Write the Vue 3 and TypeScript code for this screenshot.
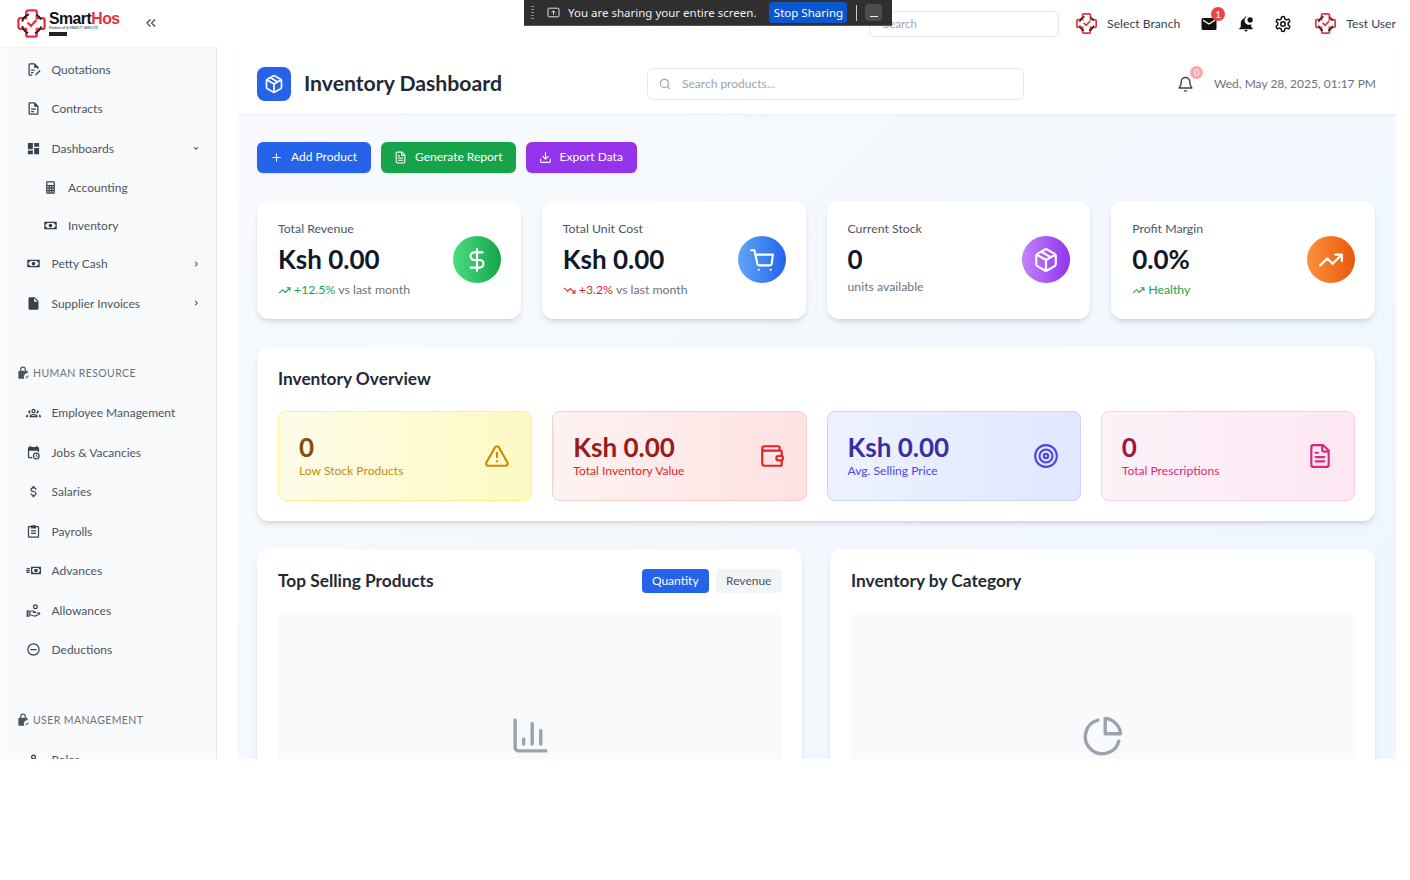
<template>
  <div class="page">
    <svg class="defs" width="0" height="0">
      <symbol id="logo" viewBox="0 0 32 32">
        <path d="M12.500 2.500h7a2 2 0 0 1 2 2v6h6a2 2 0 0 1 2 2v7a2 2 0 0 1-2 2h-6v6a2 2 0 0 1-2 2h-7a2 2 0 0 1-2-2v-6h-6a2 2 0 0 1-2-2v-7a2 2 0 0 1 2-2h6v-6a2 2 0 0 1 2-2z" fill="none" stroke="#e2333d" stroke-width="2.400" />
        <path d="M6.500 14a10 10 0 0 1 7-7.500M26 12a10 10 0 0 0-5-5M6.500 18.500a10 10 0 0 0 6 7.500M19.500 26a10 10 0 0 0 6.500-7" fill="none" stroke="#1f1f1f" stroke-width="1.800" />
        <path d="M12 15l3.500 3.500 5.500-6" fill="none" stroke="#e2333d" stroke-width="2.400" />
      </symbol>
    </svg>

    <header class="topbar">
      <div class="brand">
        <svg class="brand-logo"><use href="#logo" /></svg>
        <div class="brand-text">
          <div class="brand-name">Smart<span>Hos</span></div>
          <div class="brand-tag">Product of G-MAXI IT GEN LTD</div>
          <div class="brand-box"></div>
        </div>
      </div>
      <svg class="collapse" viewBox="0 0 24 24"><path d="M11 6l-6 6 6 6M19 6l-6 6 6 6" /></svg>

      <div class="top-right">
        <div class="top-search">Search</div>
        <div class="top-branch">
          <svg class="small-logo"><use href="#logo" /></svg>
          <span>Select Branch</span>
        </div>
        <div class="top-icon mail">
          <svg viewBox="0 0 24 24" fill="#111"><path d="M20 4H4a2 2 0 0 0-2 2v12a2 2 0 0 0 2 2h16a2 2 0 0 0 2-2V6a2 2 0 0 0-2-2zm0 4l-8 5-8-5V6l8 5 8-5z" /></svg>
          <span class="mail-count">1</span>
        </div>
        <div class="top-icon">
          <svg viewBox="0 0 24 24" fill="#111"><path d="M21 6.500a3.500 3.500 0 1 1-7 0 3.500 3.500 0 0 1 7 0zM19 12.300V16l2 2v1H3v-1l2-2v-5c0-3.100 2-5.700 5-6.600V4a2 2 0 0 1 2.900-1.800A5.500 5.500 0 0 0 19 12.300zM14 20a2 2 0 0 1-4 0z" /></svg>
        </div>
        <div class="top-icon">
          <svg viewBox="0 0 24 24" fill="none" stroke="#111" stroke-width="2"><circle cx="12" cy="12" r="3" /><path d="M12.200 2h-.4a2 2 0 0 0-2 2v.2a2 2 0 0 1-1 1.700l-.4.300a2 2 0 0 1-2 0l-.2-.1a2 2 0 0 0-2.700.7l-.2.400a2 2 0 0 0 .7 2.700l.2.100a2 2 0 0 1 1 1.700v.5a2 2 0 0 1-1 1.700l-.2.100a2 2 0 0 0-.7 2.700l.2.400a2 2 0 0 0 2.700.7l.2-.1a2 2 0 0 1 2 0l.4.300a2 2 0 0 1 1 1.700v.2a2 2 0 0 0 2 2h.4a2 2 0 0 0 2-2v-.2a2 2 0 0 1 1-1.700l.4-.3a2 2 0 0 1 2 0l.2.100a2 2 0 0 0 2.700-.7l.2-.4a2 2 0 0 0-.7-2.700l-.2-.1a2 2 0 0 1-1-1.700v-.5a2 2 0 0 1 1-1.700l.2-.1a2 2 0 0 0 .7-2.700l-.2-.4a2 2 0 0 0-2.700-.7l-.2.100a2 2 0 0 1-2 0l-.4-.3a2 2 0 0 1-1-1.700V4a2 2 0 0 0-2-2z" /></svg>
        </div>
        <div class="top-user">
          <svg class="small-logo"><use href="#logo" /></svg>
          <span>Test User</span>
        </div>
      </div>
    </header>

    <div class="share-bar">
      <span class="grip"></span>
      <svg class="share-icon" viewBox="0 0 16 14" fill="none" stroke="#eee" stroke-width="1.200"><rect x="1" y="1.500" width="14" height="11" rx="1.500" /><path d="M8 10V5M5.800 7L8 4.800 10.200 7" /></svg>
      <span class="share-text">You are sharing your entire screen.</span>
      <button class="share-stop">Stop Sharing</button>
      <span class="share-divider"></span>
      <button class="share-min"><i></i></button>
    </div>

    <div class="layout">
      <aside class="sidebar">
        <template v-for="group in menu" :key="group.title">
          <div v-if="group.title" class="side-label">
            <svg viewBox="0 0 24 24" fill="#4b5563"><path d="M12 1a5 5 0 0 0-5 5v2H6a2 2 0 0 0-2 2v10a2 2 0 0 0 2 2h8.500l-.5-1a6 6 0 0 1 6-8.500V10a2 2 0 0 0-2-2h-1V6a5 5 0 0 0-5-5zm0 2a3 3 0 0 1 3 3v2H9V6a3 3 0 0 1 3-3zM16 19l2 2 4-4-1-1-3 3-1-1z" /></svg>
            {{ group.title }}
          </div>
          <div class="side-items">
            <div v-for="item in group.items" :key="item.name" class="side-item" :class="{ 'side-sub': item.sub }">
              <svg class="side-icon" viewBox="0 0 24 24"><path :d="sideIcons[item.icon]" /></svg>
              <span class="side-name">{{ item.name }}</span>
              <svg v-if="item.arrow" class="side-arrow" viewBox="0 0 24 24">
                <path :d="item.arrow === 'down' ? 'M7 10l5 5 5-5' : 'M10 7l5 5-5 5'" />
              </svg>
            </div>
          </div>
        </template>
      </aside>

      <main class="main">
        <div class="main-head">
          <div class="head-title">
            <span class="head-badge">
              <svg viewBox="0 0 24 24" fill="none" stroke="#fff" stroke-width="2" stroke-linejoin="round"><path :d="boxIcon" /></svg>
            </span>
            <h1>Inventory Dashboard</h1>
          </div>
          <div class="head-search">
            <svg viewBox="0 0 24 24" fill="none" stroke="#9ca3af" stroke-width="2" stroke-linecap="round"><circle cx="11" cy="11" r="7" /><path d="M20 20l-4-4" /></svg>
            <span>Search products...</span>
          </div>
          <div class="head-right">
            <div class="head-bell">
              <svg viewBox="0 0 24 24" fill="none" stroke="#374151" stroke-width="2" stroke-linecap="round" stroke-linejoin="round"><path d="M6 8a6 6 0 0 1 12 0c0 7 3 8 3 9H3c0-1 3-2 3-9M10.500 21h3" /></svg>
              <span class="bell-count">0</span>
            </div>
            <span class="head-date">Wed, May 28, 2025, 01:17 PM</span>
          </div>
        </div>

        <div class="content">
          <div class="actions">
            <button v-for="a in actions" :key="a.label" class="action" :class="a.cls">
              <svg viewBox="0 0 24 24" fill="none" stroke="#fff" stroke-width="2" stroke-linecap="round" stroke-linejoin="round"><path :d="a.icon" /></svg>
              <span>{{ a.label }}</span>
            </button>
          </div>

          <div class="stats">
            <div v-for="s in stats" :key="s.label" class="stat">
              <div>
                <div class="stat-label">{{ s.label }}</div>
                <div class="stat-value">{{ s.value }}</div>
                <div class="stat-note" :class="{ plain: !s.trend }">
                  <svg v-if="s.trend" viewBox="0 0 24 24" fill="none" stroke-width="2" :class="s.trend"><path :d="s.trend === 'up' ? trendUp : trendDown" /></svg>
                  <span v-if="s.delta" :class="s.trend">{{ s.delta }}</span>
                  {{ s.note }}
                </div>
              </div>
              <span class="stat-icon" :class="s.cls">
                <svg viewBox="0 0 24 24" fill="none" stroke="#fff" stroke-width="2" stroke-linecap="round" stroke-linejoin="round"><path :d="s.icon" /></svg>
              </span>
            </div>
          </div>

          <section class="panel overview">
            <h2>Inventory Overview</h2>
            <div class="tiles">
              <div v-for="t in tiles" :key="t.label" class="tile" :class="t.cls">
                <div>
                  <div class="tile-value">{{ t.value }}</div>
                  <div class="tile-label">{{ t.label }}</div>
                </div>
                <svg viewBox="0 0 24 24" fill="none" stroke="currentColor" stroke-width="2" stroke-linecap="round" stroke-linejoin="round"><path :d="t.icon" /></svg>
              </div>
            </div>
          </section>

          <div class="charts">
            <section class="panel chart">
              <div class="chart-head">
                <h2>Top Selling Products</h2>
                <div class="toggle">
                  <button class="on">Quantity</button>
                  <button>Revenue</button>
                </div>
              </div>
              <div class="chart-empty">
                <svg viewBox="0 0 24 24" fill="none" stroke="#9ca3af" stroke-width="2" stroke-linecap="round" stroke-linejoin="round"><path d="M3 3v16a2 2 0 0 0 2 2h16M8 17v-3M13 17V5M18 17V9" /></svg>
              </div>
            </section>
            <section class="panel chart">
              <div class="chart-head">
                <h2>Inventory by Category</h2>
              </div>
              <div class="chart-empty">
                <svg viewBox="0 0 24 24" fill="none" stroke="#9ca3af" stroke-width="2" stroke-linecap="round" stroke-linejoin="round"><path d="M21 15.300A10 10 0 1 1 8.700 3M22 11A10 10 0 0 0 13 2v9z" /></svg>
              </div>
            </section>
          </div>
        </div>
      </main>
    </div>
  </div>
</template>

<script setup lang="ts">
interface MenuItem {
  name: string
  icon: string
  sub?: boolean
  arrow?: 'down' | 'right'
}

const sideIcons: Record<string, string> = {
  quote: 'M6 2h8l6 6v3h-2V9h-5V4H6v16h4v2H6a2 2 0 0 1-2-2V4a2 2 0 0 1 2-2zm2 10h6v2H8zm0 4h4v2H8zm13.700-3.300l1.600 1.600-6.300 6.300-2.500.9.900-2.500z',
  doc: 'M6 2h8l6 6v12a2 2 0 0 1-2 2H6a2 2 0 0 1-2-2V4a2 2 0 0 1 2-2zm0 2v16h12V9h-5V4zm2 8h8v2H8zm0 4h5v2H8z',
  dash: 'M13 3v6h8V3m-8 18h8V11h-8M3 21h8v-6H3m0-2h8V3H3v10z',
  calc: 'M7 2h10a2 2 0 0 1 2 2v16a2 2 0 0 1-2 2H7a2 2 0 0 1-2-2V4a2 2 0 0 1 2-2m0 2v4h10V4H7m0 6v2h2v-2H7m4 0v2h2v-2h-2m4 0v2h2v-2h-2m-8 4v2h2v-2H7m4 0v2h2v-2h-2m4 0v2h2v-2h-2m-8 4v2h2v-2H7m4 0v2h2v-2h-2m4 0v2h2v-2h-2z',
  cash: 'M2 6h20v12H2V6zm10 3a3 3 0 1 0 0 6 3 3 0 0 0 0-6zM6.500 8A2.500 2.500 0 0 1 4 10.500v3A2.500 2.500 0 0 1 6.500 16h11a2.500 2.500 0 0 1 2.500-2.500v-3A2.500 2.500 0 0 1 17.500 8h-11z',
  file: 'M13 9V3.500L18.500 9M6 2c-1.110 0-2 .89-2 2v16a2 2 0 0 0 2 2h12a2 2 0 0 0 2-2V8l-6-6H6z',
  people: 'M12 6a3.500 3.500 0 1 1 0 7 3.500 3.500 0 0 1 0-7zm0 2a1.500 1.500 0 1 0 0 3 1.500 1.500 0 0 0 0-3zM5 8.500a2.500 2.500 0 0 1 1.800.7A5 5 0 0 0 7.500 13 2.500 2.500 0 1 1 5 8.500zm14 0a2.500 2.500 0 1 1-2.500 4.500 5 5 0 0 0 .7-3.800 2.500 2.500 0 0 1 1.800-.7zM12 14.500c3.600 0 6.500 1.400 6.500 3.500v1.500h-13V18c0-2.100 2.900-3.500 6.500-3.500zm0 2c-2.200 0-3.900.7-4.300 1h8.600c-.4-.3-2.100-1-4.300-1zM0 19.500V18c0-1.300 1.600-2.300 3.800-2.700-.5.700-.8 1.600-.8 2.700v1.500H0zm24 0h-3V18c0-1.100-.3-2-.8-2.700 2.200.4 3.800 1.400 3.800 2.700v1.500z',
  jobs: 'M6 1h2v2h8V1h2v2h1a2 2 0 0 1 2 2v6h-2V9H5v10h5v2H5a2 2 0 0 1-2-2V5a2 2 0 0 1 2-2h1V1zm10.500 11a5.500 5.500 0 1 1 0 11 5.500 5.500 0 0 1 0-11zm0 2a3.500 3.500 0 1 0 0 7 3.500 3.500 0 0 0 0-7zM16 15h1.200v2.300l1.800 1-.6 1-2.400-1.400z',
  usd: 'M7 15h2c0 1.080 1.370 2 3 2s3-.92 3-2c0-1.100-1.040-1.500-3.240-2.030C9.640 12.440 7 11.780 7 9c0-1.790 1.470-3.310 3.500-3.820V3h3v2.180C15.530 5.690 17 7.210 17 9h-2c0-1.080-1.370-2-3-2s-3 .92-3 2c0 1.100 1.040 1.500 3.240 2.030C14.360 11.560 17 12.220 17 15c0 1.790-1.470 3.310-3.500 3.820V21h-3v-2.180C8.470 18.310 7 16.790 7 15z',
  clip: 'M9 2h6a1 1 0 0 1 1 1v0h3a2 2 0 0 1 2 2v15a2 2 0 0 1-2 2H5a2 2 0 0 1-2-2V5a2 2 0 0 1 2-2h3v0a1 1 0 0 1 1-1zM5 5v15h14V5h-3v2H8V5zm3 5h8v2H8zm0 4h8v2H8z',
  advance: 'M8 6h16v12H8V6zm8 3a3 3 0 1 0 0 6 3 3 0 0 0 0-6zm-5.500-1A2 2 0 0 1 10 10v4a2 2 0 0 1 2 2h8a2 2 0 0 1 2-2v-4a2 2 0 0 1-2-2h-8zM1 8h5v2H1zm-1 3h6v2H0zm1 3h5v2H1z',
  allow: 'M15 2a4 4 0 1 1 0 8 4 4 0 0 1 0-8zm0 2a2 2 0 1 0 0 4 2 2 0 0 0 0-4zM1 12h5v10H1V12zm2 2v6h1v-6zm4-2h3c3 0 5 1 6 2.500V16h-5v-1.500h3.200c-.8-.6-2.200-.9-4.200-.9H8v5l6 1.300 7-2.300c.3-.6-.3-1.100-1-1l-3 1v-2l3.500-.8c2-.3 3.200 1.800 2 3.600L14.500 22 7 20z',
  minus: 'M12 2a10 10 0 1 1 0 20 10 10 0 0 1 0-20zm0 2a8 8 0 1 0 0 16 8 8 0 0 0 0-16zM7 11h10v2H7z',
  person: 'M12 4a4 4 0 1 1 0 8 4 4 0 0 1 0-8zm0 2a2 2 0 1 0 0 4 2 2 0 0 0 0-4zm0 7c2.700 0 8 1.300 8 4v3H4v-3c0-2.700 5.300-4 8-4z',
}

const menu: { title: string; items: MenuItem[] }[] = [
  {
    title: '',
    items: [
      { name: 'Quotations', icon: 'quote' },
      { name: 'Contracts', icon: 'doc' },
      { name: 'Dashboards', icon: 'dash', arrow: 'down' },
      { name: 'Accounting', icon: 'calc', sub: true },
      { name: 'Inventory', icon: 'cash', sub: true },
      { name: 'Petty Cash', icon: 'cash', arrow: 'right' },
      { name: 'Supplier Invoices', icon: 'file', arrow: 'right' },
    ],
  },
  {
    title: 'HUMAN RESOURCE',
    items: [
      { name: 'Employee Management', icon: 'people' },
      { name: 'Jobs & Vacancies', icon: 'jobs' },
      { name: 'Salaries', icon: 'usd' },
      { name: 'Payrolls', icon: 'clip' },
      { name: 'Advances', icon: 'advance' },
      { name: 'Allowances', icon: 'allow' },
      { name: 'Deductions', icon: 'minus' },
    ],
  },
  {
    title: 'USER MANAGEMENT',
    items: [{ name: 'Roles', icon: 'person' }],
  },
]

const boxIcon = 'M21 8a2 2 0 0 0-1-1.700l-7-4a2 2 0 0 0-2 0l-7 4A2 2 0 0 0 3 8v8a2 2 0 0 0 1 1.700l7 4a2 2 0 0 0 2 0l7-4a2 2 0 0 0 1-1.700zM3.300 7L12 12l8.700-5M12 22V12M7.500 4.300l9 5.200'
const trendUp = 'M22 7l-8.500 8.500-5-5L2 17M16 7h6v6'
const trendDown = 'M22 17l-8.500-8.500-5 5L2 7M16 17h6v-6'

const actions = [
  { label: 'Add Product', cls: 'blue', icon: 'M5 12h14M12 5v14' },
  { label: 'Generate Report', cls: 'green', icon: 'M15 2H6a2 2 0 0 0-2 2v16a2 2 0 0 0 2 2h12a2 2 0 0 0 2-2V7zM14 2v6h6M8 13h8M8 17h8M8 9h2' },
  { label: 'Export Data', cls: 'purple', icon: 'M21 15v4a2 2 0 0 1-2 2H5a2 2 0 0 1-2-2v-4M7 10l5 5 5-5M12 15V3' },
]

const stats = [
  { label: 'Total Revenue', value: 'Ksh 0.00', delta: '+12.5%', note: 'vs last month', trend: 'up', cls: 'green', icon: 'M12 2v20M17 5H9.500a3.500 3.500 0 0 0 0 7h5a3.500 3.500 0 0 1 0 7H6' },
  { label: 'Total Unit Cost', value: 'Ksh 0.00', delta: '+3.2%', note: 'vs last month', trend: 'down', cls: 'blue', icon: 'M2 3h3l2.700 12.400a2 2 0 0 0 2 1.600h9.300a2 2 0 0 0 2-1.600L22 7H6M9 21h.01M20 21h.01' },
  { label: 'Current Stock', value: '0', delta: '', note: 'units available', trend: '', cls: 'purple', icon: boxIcon },
  { label: 'Profit Margin', value: '0.0%', delta: 'Healthy', note: '', trend: 'up', cls: 'orange', icon: trendUp },
]

const tiles = [
  { label: 'Low Stock Products', value: '0', cls: 'yellow', icon: 'M21.700 18l-8-14a2 2 0 0 0-3.500 0l-8 14A2 2 0 0 0 4 21h16a2 2 0 0 0 1.700-3zM12 9v4M12 17h.01' },
  { label: 'Total Inventory Value', value: 'Ksh 0.00', cls: 'red', icon: 'M19 7V4a1 1 0 0 0-1-1H5a2 2 0 0 0 0 4h15a1 1 0 0 1 1 1v4h-3a2 2 0 0 0 0 4h3a1 1 0 0 0 1-1v-2a1 1 0 0 0-1-1M3 5v14a2 2 0 0 0 2 2h15a1 1 0 0 0 1-1v-4' },
  { label: 'Avg. Selling Price', value: 'Ksh 0.00', cls: 'indigo', icon: 'M12 2a10 10 0 1 0 0 20 10 10 0 0 0 0-20zM12 6a6 6 0 1 0 0 12 6 6 0 0 0 0-12zM12 10a2 2 0 1 0 0 4 2 2 0 0 0 0-4z' },
  { label: 'Total Prescriptions', value: '0', cls: 'pink', icon: 'M15 2H6a2 2 0 0 0-2 2v16a2 2 0 0 0 2 2h12a2 2 0 0 0 2-2V7zM14 2v4a2 2 0 0 0 2 2h4M10 9H8M16 13H8M16 17H8' },
]
</script>

<style>
body {
  background: #fff;
}
</style>

<style scoped>
.page {
  position: relative;
  height: 759px;
  overflow: hidden;
  font-family: Lato, "Open Sans", sans-serif;
  color: #374151;
}

.defs {
  position: absolute;
}

/* top bar */
.topbar {
  height: 47px;
  display: flex;
  align-items: center;
  padding-left: 16px;
  background: #fff;
}

.brand {
  display: flex;
  align-items: center;
  gap: 2px;
  width: 128px;
}

.brand-logo {
  width: 31px;
  height: 31px;
  margin-top: -1px;
}

.brand-text {
  line-height: 1;
}

.brand-name {
  font-family: "Liberation Sans", sans-serif;
  font-size: 15.800px;
  font-weight: 700;
  letter-spacing: -0.500px;
  color: #111;
}

.brand-name span {
  color: #e2333d;
}

.brand-tag {
  font-size: 3.500px;
  color: #222;
}

.brand-box {
  width: 18px;
  height: 4px;
  background: #222;
  margin-top: 1px;
}

.collapse {
  width: 14px;
  height: 14px;
  margin-top: -1px;
  fill: none;
  stroke: #374151;
  stroke-width: 2;
}

.top-right {
  display: flex;
  align-items: center;
  margin-left: auto;
  padding-right: 14px;
}

.top-search {
  width: 190px;
  height: 26px;
  box-sizing: border-box;
  border: 1px solid #e5e7eb;
  border-radius: 4px;
  font-size: 11.500px;
  line-height: 23px;
  padding-left: 13px;
  color: #9ca3af;
  margin-right: 16px;
}

.top-branch,
.top-user {
  display: flex;
  align-items: center;
  gap: 9px;
  font-size: 12.200px;
  color: #374151;
}

.top-branch span,
.top-user span {
  margin-top: -1px;
}

.small-logo {
  width: 23px;
  height: 23px;
}

.top-icon {
  position: relative;
  width: 18px;
  height: 18px;
  margin-left: 19px;
}

.top-icon.mail {
  margin-left: 20px;
}

.top-icon svg {
  display: block;
  width: 18px;
  height: 18px;
}

.mail-count {
  position: absolute;
  top: -8px;
  right: -7px;
  width: 14px;
  height: 14px;
  border-radius: 50%;
  background: #ef4444;
  color: #fff;
  font-size: 10px;
  line-height: 14px;
  text-align: center;
}

.top-user {
  margin-left: 22px;
}

/* screen share bar */
.share-bar {
  position: absolute;
  left: 524px;
  top: 0;
  width: 368px;
  height: 26px;
  display: flex;
  align-items: center;
  box-sizing: border-box;
  background: #2f2f2f;
  border-bottom: 1px solid #555;
  font-family: "Noto Sans", sans-serif;
  font-size: 11.500px;
  color: #eee;
}

.grip {
  width: 3px;
  height: 14px;
  margin-left: 7px;
  background: repeating-linear-gradient(#888 0 1px, transparent 1px 3px);
}

.share-icon {
  width: 13px;
  height: 11px;
  margin-left: 13px;
}

.share-text {
  margin-left: 8px;
  white-space: nowrap;
}

.share-stop {
  margin-left: 13px;
  width: 78px;
  height: 21px;
  padding: 0;
  border: 0;
  border-radius: 3px;
  background: #0b57d0;
  color: #fff;
  font: inherit;
  white-space: nowrap;
}

.share-divider {
  width: 1px;
  height: 16px;
  margin-left: 9px;
  background: #ccc;
}

.share-min {
  width: 17px;
  height: 17px;
  margin-left: 8px;
  padding: 0;
  border: 0;
  border-radius: 4px;
  background: #4d4d4d;
  display: flex;
  align-items: flex-end;
  justify-content: center;
}

.share-min i {
  width: 8px;
  height: 1px;
  margin-bottom: 4px;
  background: #eee;
}

/* layout */
.layout {
  display: flex;
  height: 712px;
}

/* sidebar */
.sidebar {
  width: 216px;
  margin-left: 1px;
  flex-shrink: 0;
  box-sizing: border-box;
  padding-top: 1.600px;
  background: #f9fafb;
  border-right: 1px solid #e5e7eb;
  border-top: 1px solid #f3f4f6;
}

.side-items {
  display: flex;
  flex-direction: column;
}

.side-item {
  height: 39.500px;
  display: flex;
  align-items: center;
  padding-left: 24.500px;
  padding-right: 15px;
  font-size: 12px;
  color: #4b5563;
}

.side-sub {
  height: 38px;
  padding-left: 42px;
}

.side-icon {
  width: 15px;
  height: 15px;
  fill: #374151;
  margin-right: 11px;
  flex-shrink: 0;
}

.side-sub .side-icon {
  margin-right: 10px;
}

.side-name {
  flex: 1;
}

.side-arrow {
  width: 10px;
  height: 10px;
  fill: none;
  stroke: #4b5563;
  stroke-width: 2.500;
}

.side-label {
  display: flex;
  align-items: center;
  gap: 3px;
  height: 20px;
  margin-top: 40px;
  margin-bottom: 10px;
  padding-left: 15px;
  font-size: 10.500px;
  letter-spacing: 0.400px;
  color: #6b7280;
}

.side-label svg {
  width: 14px;
  height: 14px;
}

/* main */
.main {
  width: 1159px;
  margin-left: 20px;
  flex-shrink: 0;
  background: linear-gradient(135deg, #f8fafc, #eff6ff);
}

.main-head {
  height: 67px;
  display: flex;
  align-items: center;
  box-sizing: border-box;
  padding: 7px 20px 0;
  background: #fff;
  box-shadow: 0 1px 2px rgba(0, 0, 0, 0.06);
}

.head-title {
  width: 390px;
  display: flex;
  align-items: center;
  gap: 13px;
}

.head-badge {
  width: 34px;
  height: 34px;
  border-radius: 8px;
  background: #2563eb;
  display: flex;
  align-items: center;
  justify-content: center;
}

.head-badge svg {
  width: 20px;
  height: 20px;
}

.head-title h1 {
  margin: -3px 0 0;
  font-size: 21.200px;
  font-weight: 700;
  color: #1f2937;
}

.head-search {
  width: 377px;
  height: 32px;
  box-sizing: border-box;
  display: flex;
  align-items: center;
  gap: 10px;
  padding-left: 10px;
  border: 1px solid #e5e7eb;
  border-radius: 6px;
  font-size: 12px;
  color: #9ca3af;
}

.head-search span {
  margin-top: -2px;
}

.head-search svg {
  width: 14px;
  height: 14px;
}

.head-right {
  margin-left: auto;
  display: flex;
  align-items: center;
  gap: 20px;
}

.head-bell {
  position: relative;
  width: 17px;
  height: 17px;
}

.head-bell svg {
  display: block;
  width: 17px;
  height: 17px;
}

.bell-count {
  position: absolute;
  top: -10px;
  right: -9px;
  width: 13px;
  height: 13px;
  border-radius: 50%;
  background: #fca5a5;
  color: #fff;
  font-size: 9px;
  line-height: 13px;
  text-align: center;
}

.head-date {
  margin-top: -2px;
  font-size: 12px;
  color: #6b7280;
}

.content {
  padding: 28px 21px 0 20px;
}

.actions {
  display: flex;
  gap: 10px;
}

.action {
  height: 31px;
  display: flex;
  align-items: center;
  gap: 8px;
  padding: 0 14px 0 13px;
  border: 0;
  border-radius: 6px;
  color: #fff;
  font-family: inherit;
  font-size: 12px;
  box-shadow: 0 1px 2px rgba(0, 0, 0, 0.1);
}

.action span {
  margin-top: -2px;
}

.action svg {
  width: 13px;
  height: 13px;
}

.action.blue {
  background: #2563eb;
}

.action.green {
  padding-right: 13px;
  background: #16a34a;
}

.action.purple {
  background: #9333ea;
}

.stats {
  display: grid;
  grid-template-columns: repeat(4, 1fr);
  gap: 21px;
  margin-top: 28px;
}

.stat {
  height: 118px;
  box-sizing: border-box;
  padding: 20px 20px 0 21px;
  display: flex;
  justify-content: space-between;
  align-items: flex-start;
  background: #fff;
  border-radius: 12px;
  box-shadow: 0 4px 6px -1px rgba(0, 0, 0, 0.1), 0 2px 4px -2px rgba(0, 0, 0, 0.1);
}

.stat-label {
  font-size: 12.300px;
  line-height: 16px;
  color: #4b5563;
}

.stat-value {
  margin-top: 6px;
  font-size: 26px;
  line-height: 33px;
  font-weight: 700;
  color: #111827;
}

.stat-note {
  display: flex;
  align-items: center;
  gap: 3px;
  margin-top: 6px;
  font-size: 12.300px;
  line-height: 16px;
  color: #6b7280;
}

.stat-note.plain {
  margin-top: 3px;
}

.stat-note svg {
  width: 13px;
  height: 13px;
}

.stat-note svg.up {
  stroke: #16a34a;
}

.stat-note svg.down {
  stroke: #dc2626;
}

.stat-note span.up {
  color: #16a34a;
}

.stat-note span.down {
  color: #dc2626;
}

.stat-icon {
  width: 48px;
  height: 47px;
  margin-top: 15px;
  border-radius: 50%;
  display: flex;
  align-items: center;
  justify-content: center;
}

.stat-icon svg {
  width: 26px;
  height: 26px;
}

.stat-icon.green {
  background: linear-gradient(90deg, #4ade80, #16a34a);
}

.stat-icon.blue {
  background: linear-gradient(90deg, #60a5fa, #2563eb);
}

.stat-icon.purple {
  background: linear-gradient(90deg, #c084fc, #9333ea);
}

.stat-icon.orange {
  background: linear-gradient(90deg, #fb923c, #ea580c);
}

.panel {
  background: #fff;
  border-radius: 12px;
  box-shadow: 0 4px 6px -1px rgba(0, 0, 0, 0.1), 0 2px 4px -2px rgba(0, 0, 0, 0.1);
}

.panel h2 {
  margin: 0;
  font-size: 17.300px;
  line-height: 24px;
  font-weight: 700;
  color: #1f2937;
}

.overview {
  margin-top: 28px;
  height: 174px;
  box-sizing: border-box;
  padding: 20px 20px 0 21px;
}

.tiles {
  display: grid;
  grid-template-columns: repeat(4, 1fr);
  gap: 20px;
  margin-top: 20px;
}

.tile {
  height: 90px;
  box-sizing: border-box;
  padding: 0 21px 2px 20px;
  display: flex;
  align-items: center;
  justify-content: space-between;
  border: 1px solid;
  border-radius: 8px;
}

.tile svg {
  width: 26px;
  height: 26px;
  flex-shrink: 0;
  margin-top: 2px;
}

.tile-value {
  font-size: 26px;
  line-height: 32px;
  font-weight: 700;
}

.tile-label {
  font-size: 12.100px;
  line-height: 16px;
}

.tile.yellow {
  background: linear-gradient(90deg, #fefce8, #fef9c3);
  border-color: #fef08a;
  color: #ca8a04;
}

.tile.yellow .tile-value {
  color: #854d0e;
}

.tile.red {
  background: linear-gradient(90deg, #fef2f2, #fee2e2);
  border-color: #fecaca;
  color: #dc2626;
}

.tile.red .tile-value {
  color: #991b1b;
}

.tile.indigo {
  background: linear-gradient(90deg, #eef2ff, #e0e7ff);
  border-color: #c7d2fe;
  color: #4f46e5;
}

.tile.indigo .tile-value {
  color: #3730a3;
}

.tile.pink {
  background: linear-gradient(90deg, #fdf2f8, #fce7f3);
  border-color: #fbcfe8;
  color: #db2777;
}

.tile.pink .tile-value {
  color: #9d174d;
}

.charts {
  display: grid;
  grid-template-columns: repeat(2, 1fr);
  gap: 28px;
  margin-top: 28px;
}

.chart {
  height: 400px;
  box-sizing: border-box;
  padding: 20px 20px 20px 21px;
}

.chart-head {
  display: flex;
  align-items: center;
  justify-content: space-between;
  height: 24px;
}

.toggle {
  display: flex;
  gap: 7px;
}

.toggle button {
  width: 66.500px;
  height: 24px;
  padding: 0 0 2px;
  border: 0;
  border-radius: 4px;
  background: #f3f4f6;
  color: #4b5563;
  font-family: inherit;
  font-size: 12px;
}

.toggle button.on {
  background: #2563eb;
  color: #fff;
}

.chart-empty {
  height: 300px;
  margin-top: 20px;
  display: flex;
  justify-content: center;
  padding-top: 102px;
  box-sizing: border-box;
  background: #f9fafb;
  border-radius: 8px;
}

.chart-empty svg {
  width: 41px;
  height: 41px;
}
</style>
